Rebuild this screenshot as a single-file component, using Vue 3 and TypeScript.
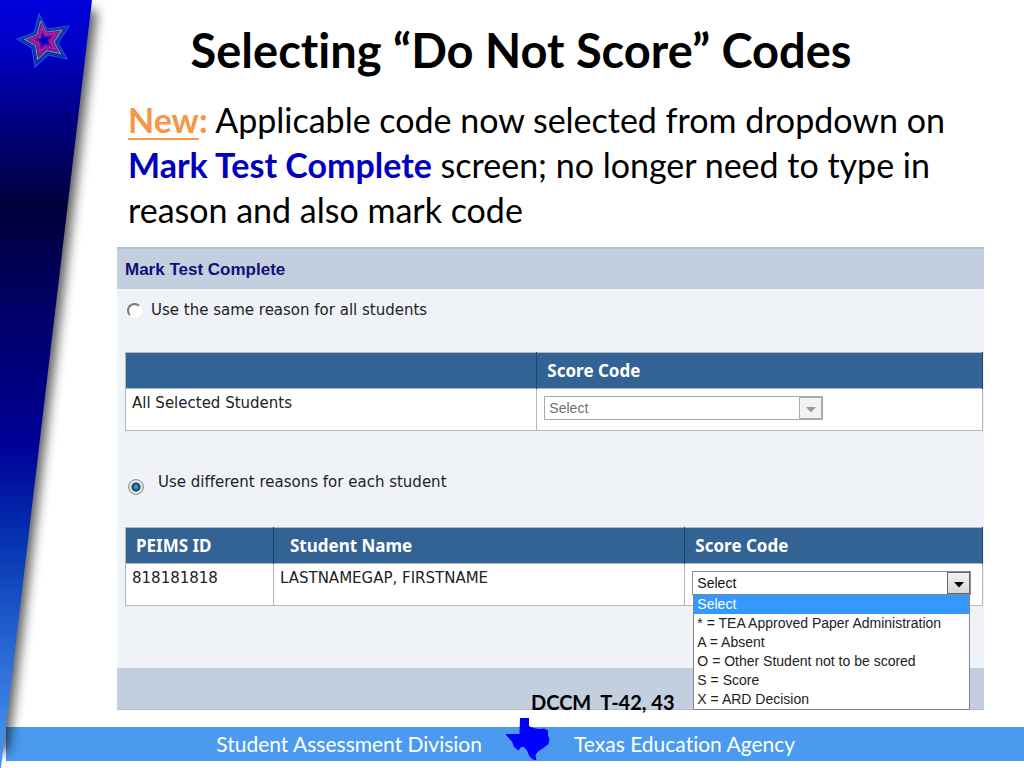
<script setup lang="ts">
import { ref } from 'vue'

const mode = ref<'same' | 'different'>('different')
const sharedCode = ref('Select')
const studentCode = ref('Select')

const codes: string[] = [
  'Select',
  '* = TEA Approved Paper Administration',
  'A = Absent',
  'O = Other Student not to be scored',
  'S = Score',
  'X = ARD Decision',
]

const starPoints = '-5,-26 3,-11 25,-14 14,3 23,19 4,15 -9,27 -12,8 -27,-1 -10,-7'
const starRings = [
  { scale: 1, color: '#2450e8' },
  { scale: 0.88, color: '#10489c' },
  { scale: 0.78, color: '#1c3c80' },
  { scale: 0.7, color: '#8a94c0' },
  { scale: 0.62, color: '#48309c' },
  { scale: 0.54, color: '#b0149c' },
  { scale: 0.46, color: '#d0189c' },
  { scale: 0.38, color: '#b41890' },
  { scale: 0.28, color: '#5c149c' },
]
</script>

<template>
  <div class="slide">
    <svg class="ribbon" viewBox="0 0 140 768" preserveAspectRatio="none" aria-hidden="true">
      <defs>
        <linearGradient id="ribbonFill" x1="0" y1="0" x2="0" y2="1">
          <stop offset="0" stop-color="#0000dc" />
          <stop offset="0.06" stop-color="#0000c8" />
          <stop offset="0.16" stop-color="#000080" />
          <stop offset="0.27" stop-color="#00003c" />
          <stop offset="0.42" stop-color="#00006c" />
          <stop offset="0.58" stop-color="#000098" />
          <stop offset="0.7" stop-color="#0432b0" />
          <stop offset="0.83" stop-color="#2462d0" />
          <stop offset="1" stop-color="#4a9af2" />
        </linearGradient>
        <filter id="ribbonBlur" x="-20%" y="-5%" width="150%" height="110%">
          <feGaussianBlur stdDeviation="6" />
        </filter>
      </defs>
      <polygon points="-20,10 97,10 8,752 -20,752" fill="#000" opacity="0.65" filter="url(#ribbonBlur)" />
      <polygon points="0,0 92,0 1,768 0,768" fill="url(#ribbonFill)" />
      <g transform="translate(44 40)" fill="none">
        <polygon
          v-for="ring in starRings"
          :key="ring.scale"
          :points="starPoints"
          :stroke="ring.color"
          :transform="`scale(${ring.scale})`"
          stroke-width="1.2"
          vector-effect="non-scaling-stroke"
        />
      </g>
    </svg>

    <header class="heading">
      <h1>Selecting “Do Not Score” Codes</h1>
      <p>
        <strong class="new"><u>New</u>:</strong> Applicable code now selected from dropdown on
        <strong class="screen">Mark Test Complete</strong> screen; no longer need to type in
        <br />reason and also mark code
      </p>
    </header>

    <main class="panel">
      <h2>Mark Test Complete</h2>
      <div class="panel-body">
        <label class="choice">
          <input v-model="mode" type="radio" name="mode" value="same" class="classic" />
          <span>Use the same reason for all students</span>
        </label>

        <table>
          <colgroup>
            <col class="wide" />
            <col />
          </colgroup>
          <thead>
            <tr>
              <th></th>
              <th scope="col">Score Code</th>
            </tr>
          </thead>
          <tbody>
            <tr>
              <td>All Selected Students</td>
              <td class="field">
                <div class="combo disabled">
                  <select v-model="sharedCode" disabled aria-label="Score code for all selected students">
                    <option v-for="code in codes" :key="code">{{ code }}</option>
                  </select>
                  <span class="arrow"><svg viewBox="0 0 10 6"><path d="M0 0h10L5 5.500z" /></svg></span>
                </div>
              </td>
            </tr>
          </tbody>
        </table>

        <label class="choice second">
          <input v-model="mode" type="radio" name="mode" value="different" class="glossy" />
          <span>Use different reasons for each student</span>
        </label>

        <table>
          <colgroup>
            <col class="id" />
            <col class="wide" />
            <col />
          </colgroup>
          <thead>
            <tr>
              <th scope="col">PEIMS ID</th>
              <th scope="col" class="name">Student Name</th>
              <th scope="col">Score Code</th>
            </tr>
          </thead>
          <tbody>
            <tr>
              <td>818181818</td>
              <td>LASTNAMEGAP, FIRSTNAME</td>
              <td class="field">
                <div class="combo">
                  <select v-model="studentCode" aria-label="Score code for LASTNAMEGAP, FIRSTNAME">
                    <option v-for="code in codes" :key="code">{{ code }}</option>
                  </select>
                  <span class="arrow"><svg viewBox="0 0 10 6"><path d="M0 0h10L5 5.500z" /></svg></span>
                  <ul class="menu" role="listbox" aria-label="Score codes">
                    <li
                      v-for="code in codes"
                      :key="code"
                      role="option"
                      :aria-selected="code === studentCode"
                      :class="{ active: code === studentCode }"
                      @click="studentCode = code"
                    >{{ code }}</li>
                  </ul>
                </div>
              </td>
            </tr>
          </tbody>
        </table>
      </div>
      <div class="panel-foot">DCCM&nbsp; T-42, 43</div>
    </main>

    <footer class="bar">
      <span class="left">Student Assessment Division</span>
      <svg class="texas" viewBox="6 6 44 43" aria-hidden="true">
        <path
          d="M20 6H29V14L32 15.500L36 16.500L40 17L44 16.500L48 18.500L48 24L49.500 27L48.500 32L44 35.500L38 39.500L35.500 43L36.500 48.500L32 47L29 43.500L27 38.500L24 35L21 35L18.500 38.500L14 35L12 29.500L6 23L6 22H19.500Z"
          fill="#0000ff"
        />
      </svg>
      <span class="right">Texas Education Agency</span>
    </footer>
  </div>
</template>

<style>
body {
  margin: 0;
  background: #fff;
}
</style>

<style scoped>
.slide {
  position: relative;
  box-sizing: border-box;
  min-height: 100vh;
  display: flex;
  flex-direction: column;
  font-family: Lato, 'Liberation Sans', sans-serif;
  font-variant-ligatures: none;
  color: #000;
}
.ribbon {
  position: absolute;
  left: 0;
  top: 0;
  width: 140px;
  height: 100%;
  pointer-events: none;
}
.heading {
  padding: 20px 60px 0 128px;
}
h1 {
  margin: 0;
  padding-right: 50px;
  font-size: 47px;
  line-height: 60px;
  font-weight: 700;
  text-align: center;
}
p {
  margin: 17px 0 0;
  font-size: 34px;
  line-height: 45px;
}
.new {
  color: #f79646;
}
.new u {
  text-decoration-thickness: 2px;
  text-underline-offset: 5px;
}
.screen {
  color: #0000c0;
}
.panel {
  margin: 15px 40px 0 117px;
  background: #eff3f8;
  font-family: 'DejaVu Sans', Verdana, sans-serif;
  font-size: 15px;
  color: #222;
}
h2 {
  margin: 0;
  box-sizing: border-box;
  height: 42px;
  padding: 0 8px;
  border-top: 2px solid #afc2d2;
  background: #c3cfdf;
  color: #10107a;
  font: 700 17px/42px 'Liberation Sans', Arial, sans-serif;
}
.panel-body {
  padding: 10px 1px 62px 8px;
}
.choice {
  display: flex;
  align-items: center;
  gap: 9px;
  height: 22px;
  margin-bottom: 31px;
}
.choice.second {
  align-items: center;
  gap: 14px;
  height: 22px;
  margin: 40px 0 34px;
  padding-left: 3px;
}
input {
  appearance: none;
  box-sizing: border-box;
  margin: 0;
  border-radius: 50%;
  flex: none;
}
.classic {
  width: 15px;
  height: 15px;
  margin-left: 2px;
  border: 2px solid;
  border-color: #777 #fff #fff #777;
  background: #fff;
}
.glossy {
  width: 16px;
  height: 16px;
  margin-top: 10px;
  border: 1px solid #8e9298;
  background: radial-gradient(circle at 50% 50%, #58b8d8 0, #1a5a80 3px, #123c5c 4px, #e8ecf0 5px, #d4d8dc 7px);
}
table {
  width: 100%;
  table-layout: fixed;
  border-collapse: collapse;
  border: 1px solid #b0b8c0;
  background: #fff;
}
col.wide {
  width: 48%;
}
col.id {
  width: 148px;
}
th {
  box-sizing: border-box;
  height: 36px;
  padding: 0 10px;
  border-right: 1px solid #1e4470;
  background: #336394;
  color: #fff;
  font: 700 17px/20px 'Noto Sans', sans-serif;
  text-align: left;
}
th.name {
  padding-left: 16px;
}
td {
  box-sizing: border-box;
  height: 42px;
  padding: 4px 6px;
  border: 1px solid #b0b8c0;
  line-height: 20px;
  vertical-align: top;
}
td.field {
  padding: 7px 7px 6px;
}
.combo {
  position: relative;
  box-sizing: border-box;
  display: flex;
  width: 279px;
  max-width: 100%;
  height: 24px;
  border: 1px solid #8c8c94;
  background: #fff;
  font: 14px/19px 'Liberation Sans', Arial, sans-serif;
}
select {
  appearance: none;
  flex: 1;
  min-width: 0;
  margin: 0;
  padding: 0 4px;
  border: 0;
  background: transparent;
  font: inherit;
  color: #111;
  opacity: 1;
}
.arrow {
  display: flex;
  align-items: center;
  justify-content: center;
  box-sizing: border-box;
  width: 23px;
  border: 1px solid #666;
  background: linear-gradient(#f4f4f4, #d8d8d8);
  pointer-events: none;
}
.arrow svg {
  width: 10px;
  height: 6px;
  margin-top: 4px;
}
.disabled {
  border-color: #a8a8a8;
}
.disabled select {
  color: #707070;
}
.disabled .arrow {
  border-color: #aaa;
  background: #f2f2f2;
}
.disabled path {
  fill: #999;
}
.menu {
  position: absolute;
  z-index: 1;
  top: 22px;
  left: 0;
  right: 0;
  margin: 0;
  padding: 0;
  border: 1px solid #84848c;
  background: #fff;
  color: #222;
  list-style: none;
}
.menu li {
  padding: 0 3px;
  white-space: nowrap;
}
.menu .active {
  background: #3399ff;
  color: #fff;
}
.panel-foot {
  box-sizing: border-box;
  height: 42px;
  padding: 22px 0 0 414px;
  border-bottom: 1px solid #afbccb;
  background: #c3cfdf;
  color: #000;
  font: 700 20px/24px Lato, sans-serif;
}
.bar {
  display: grid;
  grid-template-columns: 476fr 44px 450fr;
  column-gap: 24px;
  align-items: center;
  height: 34px;
  margin: 17px 0 7px 6px;
  background: #4a9af0;
  color: #fff;
  font-size: 21px;
  line-height: 34px;
}
.left {
  text-align: right;
}
.texas {
  width: 44px;
  height: 43px;
  margin-top: -9px;
}
</style>
